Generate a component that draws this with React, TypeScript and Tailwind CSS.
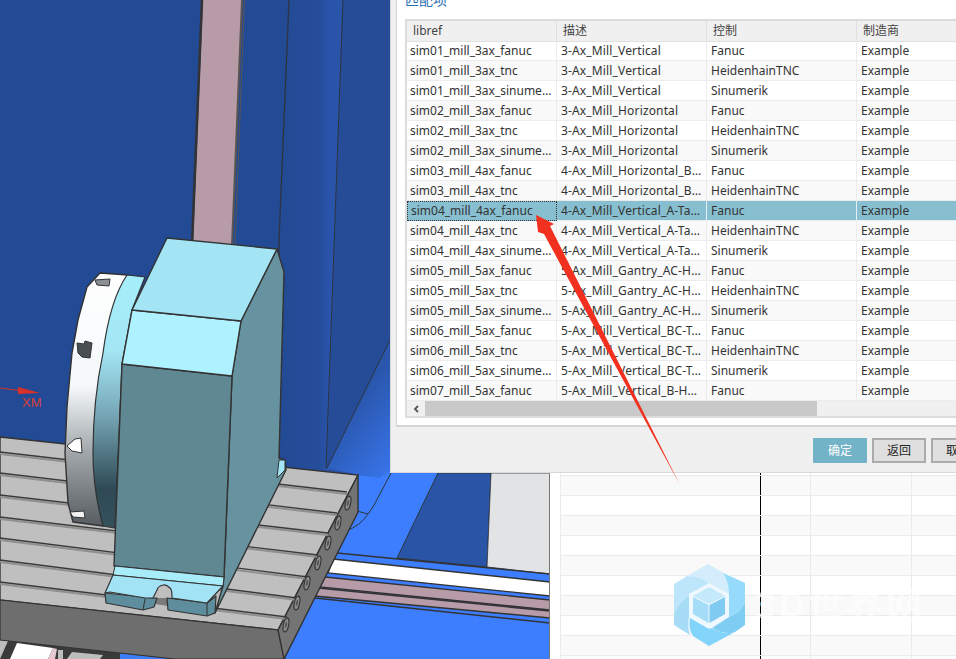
const rows = [
  ["sim01_mill_3ax_fanuc", "3-Ax_Mill_Vertical", "Fanuc", "Example"],
  ["sim01_mill_3ax_tnc", "3-Ax_Mill_Vertical", "HeidenhainTNC", "Example"],
  ["sim01_mill_3ax_sinumerik", "3-Ax_Mill_Vertical", "Sinumerik", "Example"],
  ["sim02_mill_3ax_fanuc", "3-Ax_Mill_Horizontal", "Fanuc", "Example"],
  ["sim02_mill_3ax_tnc", "3-Ax_Mill_Horizontal", "HeidenhainTNC", "Example"],
  ["sim02_mill_3ax_sinumerik", "3-Ax_Mill_Horizontal", "Sinumerik", "Example"],
  ["sim03_mill_4ax_fanuc", "4-Ax_Mill_Horizontal_B-Table", "Fanuc", "Example"],
  ["sim03_mill_4ax_tnc", "4-Ax_Mill_Horizontal_B-Table", "HeidenhainTNC", "Example"],
  ["sim04_mill_4ax_fanuc", "4-Ax_Mill_Vertical_A-Table", "Fanuc", "Example"],
  ["sim04_mill_4ax_tnc", "4-Ax_Mill_Vertical_A-Table", "HeidenhainTNC", "Example"],
  ["sim04_mill_4ax_sinumerik", "4-Ax_Mill_Vertical_A-Table", "Sinumerik", "Example"],
  ["sim05_mill_5ax_fanuc", "5-Ax_Mill_Gantry_AC-Head", "Fanuc", "Example"],
  ["sim05_mill_5ax_tnc", "5-Ax_Mill_Gantry_AC-Head", "HeidenhainTNC", "Example"],
  ["sim05_mill_5ax_sinumerik", "5-Ax_Mill_Gantry_AC-Head", "Sinumerik", "Example"],
  ["sim06_mill_5ax_fanuc", "5-Ax_Mill_Vertical_BC-Table", "Fanuc", "Example"],
  ["sim06_mill_5ax_tnc", "5-Ax_Mill_Vertical_BC-Table", "HeidenhainTNC", "Example"],
  ["sim06_mill_5ax_sinumerik", "5-Ax_Mill_Vertical_BC-Table", "Sinumerik", "Example"],
  ["sim07_mill_5ax_fanuc", "5-Ax_Mill_Vertical_B-Head", "Fanuc", "Example"],
];

const SELECTED = 8;

const slots = [
  [0, 452, 347, 492],
  [0, 473, 337, 513],
  [0, 495, 328, 533],
  [0, 517, 318, 555],
  [0, 538, 308, 577],
  [0, 560, 297, 598],
  [0, 582, 287, 617],
];

const holes = [
  [348, 503],
  [338, 523],
  [328, 543],
  [318, 563],
  [307, 583],
  [297, 603],
  [286, 625],
];

function Scene() {
  return (
    <svg width="550" height="659" viewBox="0 0 550 659" className="block shrink-0">
      <defs>
        <linearGradient id="floor" x1="325" y1="440" x2="400" y2="500" gradientUnits="userSpaceOnUse">
          <stop offset="0" stopColor="#2a57ad" />
          <stop offset="1" stopColor="#3d7eff" />
        </linearGradient>
        <linearGradient id="band" x1="280" y1="0" x2="345" y2="0" gradientUnits="userSpaceOnUse">
          <stop offset="0" stopColor="#234a94" />
          <stop offset="0.6" stopColor="#254d9b" />
          <stop offset="0.75" stopColor="#2a54ab" />
          <stop offset="1" stopColor="#2a54a8" />
        </linearGradient>
        <linearGradient id="disc" x1="0" y1="273" x2="0" y2="526" gradientUnits="userSpaceOnUse">
          <stop offset="0" stopColor="#ffffff" />
          <stop offset="0.45" stopColor="#f4f8fa" />
          <stop offset="0.7" stopColor="#a4a9ad" />
          <stop offset="1" stopColor="#565c61" />
        </linearGradient>
        <linearGradient id="ring" x1="0" y1="275" x2="0" y2="526" gradientUnits="userSpaceOnUse">
          <stop offset="0" stopColor="#a6eefb" />
          <stop offset="0.3" stopColor="#a4e6f4" />
          <stop offset="0.55" stopColor="#78a8b8" />
          <stop offset="0.85" stopColor="#2f4a55" />
          <stop offset="1" stopColor="#34505b" />
        </linearGradient>
      </defs>

      <rect width="550" height="659" fill="#234a94" />
      <rect x="280" y="0" width="65" height="480" fill="url(#band)" />
      <polygon points="343,0 550,0 550,340 327,468" fill="#264c97" />
      <polygon points="390,340 550,340 550,659 285,659 358,512 358,475 327,468" fill="url(#floor)" />
      <polygon points="391,470 550,470 550,659 285,659 358,512 358,475 380,478" fill="#3d7eff" />
      <polyline points="289,0 279,240 279,460" fill="none" stroke="#2c3540" strokeWidth="1.3" />
      <polyline points="343,0 326,468" fill="none" stroke="#2c3540" strokeWidth="1" />
      <line x1="390" y1="340" x2="327" y2="468" stroke="#2c3540" strokeWidth="1" />

      {/* pillar */}
      <polygon points="203,0 242,0 232,245 193,245" fill="#b79ca8" />
      <line x1="202" y1="0" x2="192" y2="245" stroke="#333" strokeWidth="2.5" />
      <line x1="242" y1="0" x2="232" y2="245" stroke="#5a5552" strokeWidth="2" />
      <line x1="244.5" y1="0" x2="235" y2="245" stroke="#5a5552" strokeWidth="1" />

      {/* floor pieces below the dialog */}
      <polygon points="438,473 491,473 487,567 397,558" fill="#2a55a6" stroke="#2c3540" />
      <polygon points="491,473 550,473 550,574 487,567" fill="#e2e3e5" stroke="#2c3540" strokeWidth="0.8" />
      <polyline points="391,473 373,507 368,514 357,511" fill="none" stroke="#2c3540" />
      <path d="M368 514 Q360 526 346 531" fill="none" stroke="#2c3540" />
      <line x1="337" y1="553" x2="550" y2="574" stroke="#333" strokeWidth="1.4" />
      <polygon points="333,559 550,582 550,596 328,573" fill="#ffffff" stroke="#333" strokeWidth="1.4" />
      <polygon points="325,577 550,600 550,610 320,587" fill="#b79ca8" stroke="#333" strokeWidth="1.4" />
      <polygon points="318,588 550,611 550,618 315,596" fill="#b79ca8" stroke="#333" strokeWidth="1.6" />
      <line x1="315" y1="598" x2="550" y2="623" stroke="#333" strokeWidth="1.4" />

      {/* below the table */}
      <rect x="0" y="636" width="172" height="23" fill="#3a3a3a" />
      <polygon points="0,640 8,641 0,659" fill="#bdbdbd" />
      <polygon points="17,643 53,648 48,659 10,659" fill="#ffffff" />
      <polygon points="53,648 57,649 55,659 48,659" fill="#e6c8d0" />
      <rect x="58" y="650" width="5" height="9" fill="#bdbdbd" />
      <polygon points="72,652 103,655 100,659 67,659" fill="#bdbdbd" />
      <polygon points="120,653 175,659 120,659" fill="#3d7eff" />

      {/* table */}
      <polygon points="0,437 358,475 278,630 0,600" fill="#bfbfbf" stroke="#333" strokeWidth="1.4" />
      <polygon points="0,600 278,630 285,659 175,659 0,640" fill="#6e6e6e" stroke="#333" strokeWidth="1.2" />
      <polygon points="358,475 358,512 284,659 278,630" fill="#747474" stroke="#333" strokeWidth="1.4" />
      {slots.map(([x1, y1, x2, y2], i) => (
        <g key={i}>
          <line x1={x1} y1={y1 + 2} x2={x2} y2={y2 + 2} stroke="#8f8f8f" strokeWidth="2" />
          <line x1={x1} y1={y1} x2={x2} y2={y2} stroke="#3a3a3a" strokeWidth="1.4" />
        </g>
      ))}
      {holes.map(([cx, cy], i) => (
        <g key={i}>
          <ellipse cx={cx} cy={cy} rx="2.6" ry="7" fill="#8a8a8a" stroke="#333" strokeWidth="1.1" transform={`rotate(12 ${cx} ${cy})`} />
          <ellipse cx={cx} cy={cy} rx="1" ry="3" fill="#555" transform={`rotate(12 ${cx} ${cy})`} />
        </g>
      ))}

      {/* XM axis */}
      <line x1="0" y1="388" x2="24" y2="391" stroke="#d8312c" strokeWidth="1" />
      <polygon points="18,387 40,393 18,394" fill="#d8312c" />
      <text x="22" y="407" fontSize="13" fill="#d8403c" fontFamily="'Liberation Sans', sans-serif">
        XM
      </text>

      {/* rotary disc */}
      <path
        d="M100 273 L87 287 L78 320 L72 353 L67 407 L65 453 L68 503 L73 522 L103 526 L130 400 L128 275 Z"
        fill="url(#disc)"
        stroke="#333"
        strokeWidth="1.4"
        strokeLinejoin="round"
      />
      <path
        d="M127 275 L145 277 L132 310 L122 364 L115 528 L103 526 Q93 490 93 453 Q93 400 103 353 Q110 300 127 275 Z"
        fill="url(#ring)"
        stroke="#333"
        strokeWidth="1.2"
      />
      <polygon points="95,280 110,279 109,286 97,285" fill="#8a8f92" stroke="#333" />
      <polygon points="77,343 84,344 85,341 92,343 90,358 82,357 78,353" fill="#4a4f52" stroke="#333" />
      <polygon points="67,446 75,439 81,438 82,453 72,451" fill="#ffffff" stroke="#333" />
      <polygon points="70,512 84,511 85,518 73,517" fill="#f2f2f2" stroke="#333" />

      {/* headstock */}
      <polygon points="277,249 284,272 279,458 285,460 286,470 215,613 223,586 224,577 232,376 241,321" fill="#67929f" stroke="#333" strokeWidth="1.4" strokeLinejoin="round" />
      <polygon points="279,460 285,460 285,470 277,478" fill="#a4e6f6" stroke="#333" strokeWidth="1" />
      <polygon points="122,364 232,376 224,577 114,566" fill="#5f8892" stroke="#333" strokeWidth="1.4" strokeLinejoin="round" />
      <polygon points="132,310 241,321 232,376 122,364" fill="#aff2ff" stroke="#333" strokeWidth="1.4" strokeLinejoin="round" />
      <polygon points="167,238 277,249 241,321 132,310" fill="#a3e4f5" stroke="#333" strokeWidth="1.4" strokeLinejoin="round" />

      {/* foot */}
      <polygon points="115,566 224,577 223,586 113,575" fill="#a8ecfa" stroke="#333" strokeWidth="1" />
      <polygon points="154,598 169,598 168,606 156,604" fill="#7a7a7a" />
      <polygon points="105,593 153,598 157,598 154,607 143,610 106,603" fill="#5e8d9d" stroke="#333" strokeWidth="1.2" strokeLinejoin="round" />
      <polygon points="167,598 207,603 216,596 215,613 207,616 168,610" fill="#5e8d9d" stroke="#333" strokeWidth="1.2" strokeLinejoin="round" />
      <line x1="145" y1="599" x2="143" y2="610" stroke="#333" />
      <line x1="207" y1="603" x2="207" y2="616" stroke="#333" />
      <path
        d="M113 575 L223 586 L207 603 L172 598 Q172 589 170 588 Q166 584 163 585 Q158 586 157 590 L153 598 L145 598 L110 592 L105 593 Z"
        fill="#a2e3f5"
        stroke="#333"
        strokeWidth="1.2"
        strokeLinejoin="round"
      />

      <line x1="549.5" y1="473" x2="549.5" y2="659" stroke="#777" />
    </svg>
  );
}

function Sheet() {
  return (
    <div className="flex-1 overflow-hidden bg-white pl-[10px] pt-4">
      {Array.from({ length: 33 }).map((_, i) => (
        <div
          key={i}
          className={`grid h-5 grid-cols-[200px_50px_101px_1fr] border-b border-l border-[#ebebeb] ${i % 2 === 1 ? "bg-[#f9f9f9]" : "bg-white"}`}
        >
          <div className="border-r border-black" />
          <div className="border-r border-[#ebebeb]" />
          <div className="border-r border-[#ebebeb]" />
          <div />
        </div>
      ))}
    </div>
  );
}

function Dialog() {
  const cols = "grid grid-cols-[150px_150px_150px_150px]";
  return (
    <div className="absolute left-[390px] top-0 h-[473px] w-[620px] border-l border-b border-[#d8d8d8] bg-[#f0f0f0] pl-[5px] text-[12px] leading-5 text-[#333]">
      <div className="h-[427px] w-[600px] border-b-2 border-l border-[#d4d4d4] bg-white pl-2">
        <div className="relative h-[19px]">
          <span className="absolute left-0 top-[-9px] text-[14px] leading-[18px] text-[#2a6fb0]">匹配项</span>
        </div>
        <div className="h-[399px] w-[600px] border-2 border-r-0 border-[#dcdcdc]">
          <div className={`${cols} h-5 bg-[#f0f0f0] text-[#444]`}>
            {["libref", "描述", "控制", "制造商"].map((h) => (
              <div key={h} className="border-r border-b border-[#e0e0e0] pl-[6px]">
                {h}
              </div>
            ))}
          </div>
          {rows.map((r, i) => (
            <div
              key={r[0]}
              className={`${cols} h-5 ${i === SELECTED ? "bg-[#87bfd0]" : i % 2 === 1 ? "bg-[#f9f9f9]" : "bg-white"}`}
            >
              {r.map((c, j) => (
                <div
                  key={j}
                  className={`truncate ${j === 0 ? "pl-[3px] pr-[2px]" : "pl-[4px] pr-[3px]"} ${j === 1 ? "tracking-[0.15px]" : ""} ${
                    i === SELECTED
                      ? j === 0
                        ? "border border-dotted border-[#333] pl-[2px] leading-[18px]"
                        : "border-b border-r border-[#e4f0f4]"
                      : "border-b border-r border-[#ececec]"
                  }`}
                >
                  {c}
                </div>
              ))}
            </div>
          ))}
          <div className="flex h-[15px] items-center bg-[#f0f0f0]">
            <div className="flex w-[18px] justify-center">
              <svg width="6" height="8" viewBox="0 0 6 8">
                <path d="M5 1 L2 4 L5 7" fill="none" stroke="#555" strokeWidth="1.8" />
              </svg>
            </div>
            <div className="h-full w-[392px] bg-[#c9c9c9]" />
          </div>
        </div>
      </div>
      <div className="flex gap-[5px] pl-[417px] pt-[11px]">
        <button className="h-[25px] w-[54px] bg-[#72b3c8] text-white">确定</button>
        <button className="h-[25px] w-[54px] border-2 border-[#ababab] bg-[#dfdfdf] text-[#222]">返回</button>
        <button className="h-[25px] w-[54px] border-2 border-[#ababab] bg-[#dfdfdf] text-[#222]">取消</button>
      </div>
    </div>
  );
}

function Arrow() {
  return (
    <svg width="956" height="659" viewBox="0 0 956 659" className="pointer-events-none absolute inset-0">
      <polygon points="536,215 554,224 550,226 680,485 544,234 538,232" fill="#f2301f" />
    </svg>
  );
}

function Watermark() {
  return (
    <div className="pointer-events-none absolute left-[673px] top-[564px] flex items-center gap-[10px]">
      <svg width="72" height="82" viewBox="0 0 72 82" className="shrink-0">
        <polygon points="35,0 72,19 72,61 36,82 1,61 1,20" fill="#eef8fe" />
        <path d="M35 0 L50 9 Q57 20 56 30 L36 19 Q30 13 14 12 Z" fill="#d3edfc" />
        <path d="M1 20 L14 12 Q30 13 36 19 L16 30 L16 32 Q6 38 1 50 Z" fill="#bde6fb" />
        <path d="M1 50 Q6 38 16 32 L16 53 Q14 62 17 71 L1 61 Z" fill="#a7dcf7" />
        <path d="M17 54 L36 65 L38 64 Q50 71 62 68 L36 82 L20 72 Q15 64 17 54 Z" fill="#82d4fb" />
        <path d="M39 64 L56 53 Q68 48 72 38 L72 61 L62 68 Q50 71 39 64 Z" fill="#7fcdf2" />
        <path d="M50 9 L72 19 L72 38 Q68 48 56 53 L56 30 Q56 18 50 9 Z" fill="#97dbfc" />
        <polygon points="36,23 52,32 36,40 20,32" fill="#c4e9fb" />
        <polygon points="20,33 35.5,41 35.5,59 20,50" fill="#a5dcf8" />
        <polygon points="36.5,41 52,33 52,50 36.5,59" fill="#7fcbf1" />
      </svg>
      <span className="text-[36px] font-bold leading-none tracking-[3px] text-white/60">3D世界网</span>
    </div>
  );
}

export default function App() {
  return (
    <div
      className="relative flex h-[659px] w-[956px] overflow-hidden bg-white"
      style={{ fontFamily: "'Noto Sans', 'Noto Sans CJK SC', sans-serif" }}
    >
      <Scene />
      <Sheet />
      <Dialog />
      <Watermark />
      <Arrow />
    </div>
  );
}
